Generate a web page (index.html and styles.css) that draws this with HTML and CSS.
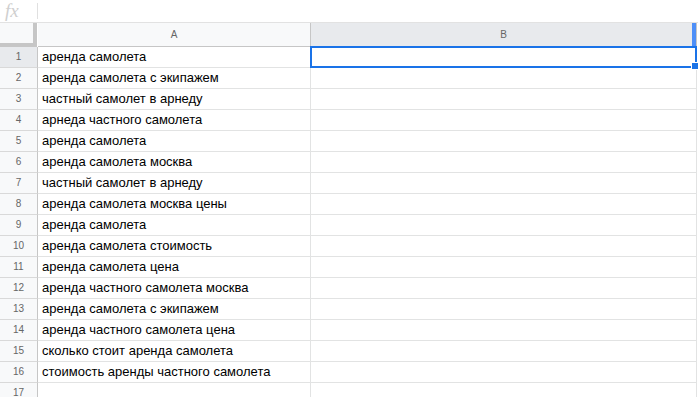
FILE: index.html
```html
<!DOCTYPE html>
<html lang="ru">
<head>
    <meta charset="UTF-8">
    <title>Sheet</title>
    <link rel="stylesheet" href="styles.css">
</head>
<body>
    <div class="fxbar">
        <span class="fx">fx</span>
        <span class="fx-sep"></span>
    </div>

    <div class="sheet">
        <div class="corner"></div>
        <div class="col-head">A</div>
        <div class="col-head selected">B<span class="col-edge"></span></div>

        <div class="row-head selected">1</div>
        <div class="cell">аренда самолета</div>
        <div class="cell active"><span class="handle"></span></div>

        <div class="row-head">2</div>
        <div class="cell">аренда самолета с экипажем</div>
        <div class="cell"></div>

        <div class="row-head">3</div>
        <div class="cell">частный самолет в арнеду</div>
        <div class="cell"></div>

        <div class="row-head">4</div>
        <div class="cell">арнеда частного самолета</div>
        <div class="cell"></div>

        <div class="row-head">5</div>
        <div class="cell">аренда самолета</div>
        <div class="cell"></div>

        <div class="row-head">6</div>
        <div class="cell">аренда самолета москва</div>
        <div class="cell"></div>

        <div class="row-head">7</div>
        <div class="cell">частный самолет в арнеду</div>
        <div class="cell"></div>

        <div class="row-head">8</div>
        <div class="cell">аренда самолета москва цены</div>
        <div class="cell"></div>

        <div class="row-head">9</div>
        <div class="cell">аренда самолета</div>
        <div class="cell"></div>

        <div class="row-head">10</div>
        <div class="cell">аренда самолета стоимость</div>
        <div class="cell"></div>

        <div class="row-head">11</div>
        <div class="cell">аренда самолета цена</div>
        <div class="cell"></div>

        <div class="row-head">12</div>
        <div class="cell">аренда частного самолета москва</div>
        <div class="cell"></div>

        <div class="row-head">13</div>
        <div class="cell">аренда самолета с экипажем</div>
        <div class="cell"></div>

        <div class="row-head">14</div>
        <div class="cell">аренда частного самолета цена</div>
        <div class="cell"></div>

        <div class="row-head">15</div>
        <div class="cell">сколько стоит аренда самолета</div>
        <div class="cell"></div>

        <div class="row-head">16</div>
        <div class="cell">стоимость аренды частного самолета</div>
        <div class="cell"></div>

        <div class="row-head">17</div>
        <div class="cell"></div>
        <div class="cell"></div>
    </div>
</body>
</html>
```

FILE: styles.css
```css
body {
    margin: 0;
    background: #fff;
    font-family: "Liberation Sans", Arial, sans-serif;
    overflow: hidden;
}

.fxbar {
    height: 22px;
    border-bottom: 1px solid #e2e2e2;
    display: flex;
    align-items: center;
}
.fx {
    width: 37px;
    padding-left: 5px;
    box-sizing: border-box;
    font-family: "Liberation Serif", serif;
    font-style: italic;
    font-size: 19px;
    color: #cfcfcf;
    line-height: 18px;
}
.fx-sep {
    width: 1px;
    height: 16px;
    background: #e0e0e0;
}

.sheet {
    display: grid;
    grid-template-columns: 38px 273px 386px;
    grid-template-rows: 24px;
    grid-auto-rows: 21px;
}
.sheet > div {
    box-sizing: border-box;
    border-right: 1px solid #e2e3e3;
    border-bottom: 1px solid #e2e3e3;
}

.corner {
    background: #f8f9fa;
    border-right: 4px solid #c6c6c6 !important;
    border-bottom: 4px solid #c6c6c6 !important;
    margin-right: 1px;
}
.col-head {
    background: #f8f9fa;
    border-right: 1px solid #c6c6c6 !important;
    border-bottom: 1px solid #c6c6c6 !important;
    color: #666;
    font-size: 10px;
    line-height: 23px;
    text-align: center;
    position: relative;
}
.row-head {
    background: #f8f9fa;
    border-right: 1px solid #c6c6c6 !important;
    border-bottom: 1px solid #d9d9d9 !important;
    color: #666;
    font-size: 10px;
    line-height: 20px;
    text-align: center;
}
.selected {
    background: #e8eaed;
}
.col-edge {
    position: absolute;
    top: 0;
    right: 0;
    width: 4px;
    height: 23px;
    background: #4d8ff8;
}

.cell {
    font-size: 13px;
    line-height: 20px;
    color: #000;
    padding-left: 4px;
    white-space: nowrap;
    overflow: hidden;
}
.cell.active {
    position: relative;
    overflow: visible;
}
.cell.active::after {
    content: "";
    position: absolute;
    left: -1px;
    top: -1px;
    right: -1px;
    bottom: -1px;
    border: 2px solid #1a73e8;
}
.handle {
    position: absolute;
    right: -3px;
    bottom: -3px;
    width: 6px;
    height: 6px;
    background: #1a73e8;
    border: 1px solid #fff;
    z-index: 1;
}
```
